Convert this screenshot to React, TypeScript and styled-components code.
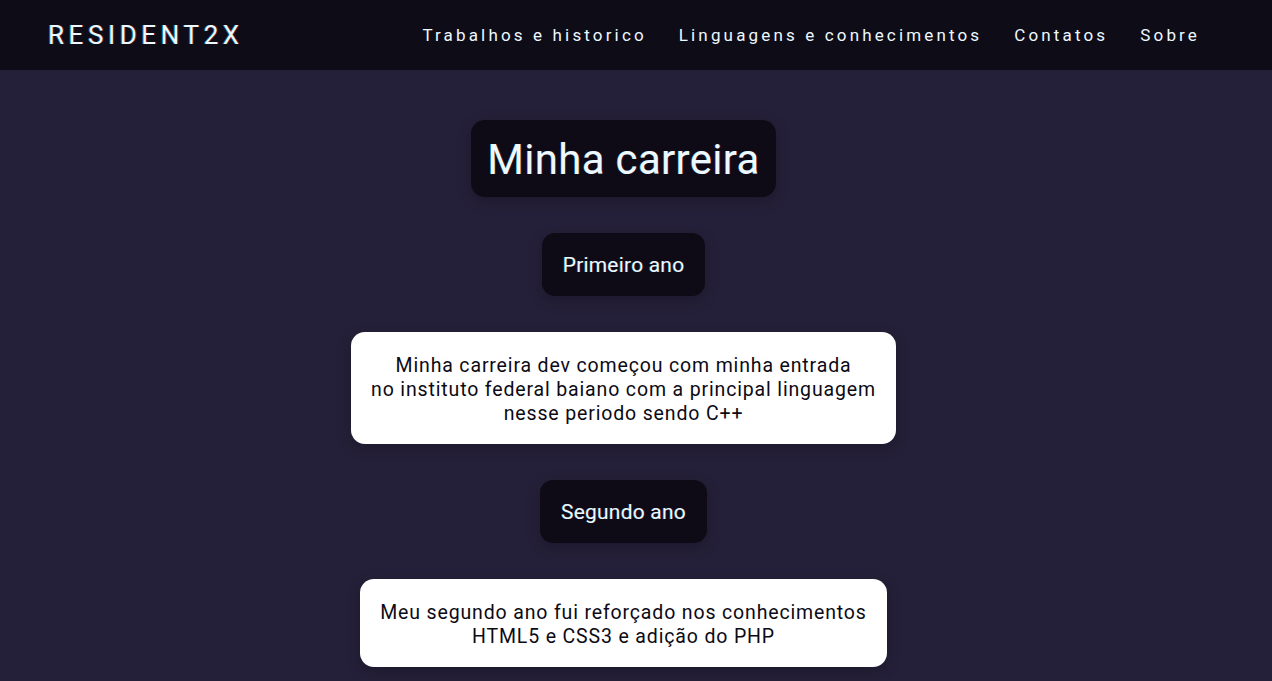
import React from "react";
import styled, { createGlobalStyle } from "styled-components";

const Global = createGlobalStyle`
  html, body { margin: 0; padding: 0; }
  body {
    background: #252039;
    font-family: Roboto, "Noto Sans", sans-serif;
    min-height: 100vh;
  }
`;

const Header = styled.header`
  height: 70px;
  background: #0e0c17;
  display: flex;
  align-items: center;
  justify-content: space-between;
  padding: 0 72px 0 48px;
  box-sizing: border-box;
`;

const Logo = styled.div`
  color: #eef8ff;
  font-size: 26px;
  letter-spacing: 4.6px;
  font-weight: 400;
  text-shadow: -1px 0 rgba(0, 220, 255, 0.45), 1px 0 rgba(255, 40, 40, 0.35);
`;

const Nav = styled.nav`
  display: flex;
  gap: 32px;
`;

const NavLink = styled.a`
  color: #eef8ff;
  font-size: 17px;
  letter-spacing: 3.15px;
  text-decoration: none;
  cursor: pointer;
`;

const Main = styled.main`
  display: flex;
  flex-direction: column;
  align-items: center;
  gap: 36px;
  padding: 50px 25px 40px 0;
`;

const DarkBox = styled.div<{ $big?: boolean }>`
  background: #0e0b17;
  color: #eef8ff;
  border-radius: ${(p) => (p.$big ? "14px" : "13px")};
  box-shadow: 0 4px 14px rgba(0, 0, 0, 0.25);
  font-size: ${(p) => (p.$big ? "42px" : "21px")};
  line-height: ${(p) => (p.$big ? "45px" : "25px")};
  letter-spacing: ${(p) => (p.$big ? "0.3px" : "0.2px")};
  padding: ${(p) => (p.$big ? "17px 16px 15px" : "20px 21px 18px")};
  text-shadow: -0.6px 0 rgba(0, 220, 255, 0.35), 0.6px 0 rgba(255, 40, 40, 0.25);
`;

const Card = styled.div`
  background: #ffffff;
  color: #0c0a14;
  border-radius: 14px;
  box-shadow: 0 4px 14px rgba(0, 0, 0, 0.25);
  font-size: 19.5px;
  line-height: 24px;
  letter-spacing: 0.85px;
  text-align: center;
  padding: 22px 20px 18px;
`;

const Line = styled.div``;

const navItems = [
  "Trabalhos e historico",
  "Linguagens e conhecimentos",
  "Contatos",
  "Sobre",
];

const timeline = [
  {
    year: "Primeiro ano",
    lines: [
      "Minha carreira dev começou com minha entrada",
      "no instituto federal baiano com a principal linguagem",
      "nesse periodo sendo C++",
    ],
  },
  {
    year: "Segundo ano",
    lines: [
      "Meu segundo ano fui reforçado nos conhecimentos",
      "HTML5 e CSS3 e adição do PHP",
    ],
  },
];

export default function App() {
  return (
    <>
      <Global />
      <Header>
        <Logo>RESIDENT2X</Logo>
        <Nav>
          {navItems.map((n) => (
            <NavLink key={n}>{n}</NavLink>
          ))}
        </Nav>
      </Header>
      <Main>
        <DarkBox $big>Minha carreira</DarkBox>
        {timeline.map((t) => (
          <React.Fragment key={t.year}>
            <DarkBox>{t.year}</DarkBox>
            <Card>
              {t.lines.map((l) => (
                <Line key={l}>{l}</Line>
              ))}
            </Card>
          </React.Fragment>
        ))}
      </Main>
    </>
  );
}
